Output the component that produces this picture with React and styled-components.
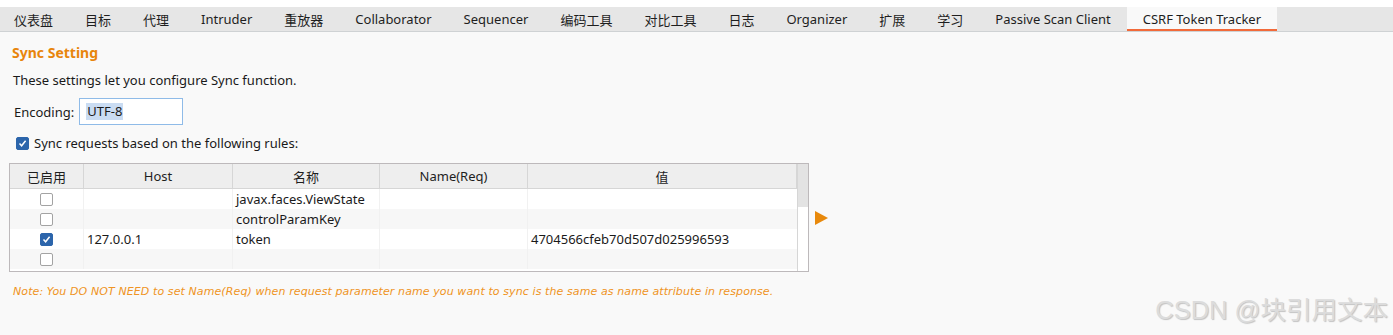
import React from "react";
import styled, { createGlobalStyle } from "styled-components";

const GlobalStyle = createGlobalStyle`
  html, body { margin: 0; padding: 0; }
  body {
    background: #f9f9f9;
    font-family: "Noto Sans", "Noto Sans CJK SC", sans-serif;
    font-size: 13px;
    color: #1a1a1a;
    width: 1393px;
    height: 335px;
    overflow: hidden;
  }
`;

const Page = styled.div`
  position: relative;
  width: 1393px;
  height: 335px;
  background: #f9f9f9;
`;

const Header = styled.div`
  background: #ffffff;
  padding-top: 7px;
`;

const TabBar = styled.div`
  display: flex;
  height: 24px;
  background: #e6e6e6;
  border-bottom: 1px solid #cfd2d4;
`;

const Tab = styled.div`
  display: flex;
  align-items: center;
  padding: 2px 16px 0 ${(p) => (p.$first ? "14px" : "16px")};
  height: 24px;
  box-sizing: border-box;
  white-space: nowrap;
  color: #1e1e1e;
  background: ${(p) => (p.$active ? "#f9f9f9" : "transparent")};
  border-bottom: 2px solid ${(p) => (p.$active ? "#f26a3a" : "transparent")};
`;

const Content = styled.div`
  padding: 12px 0 0 9px;
`;

const Title = styled.div`
  color: #e8850c;
  font-weight: bold;
  font-size: 14px;
  line-height: 18px;
  padding-left: 3px;
`;

const Desc = styled.div`
  margin-top: 9px;
  padding-left: 4px;
  line-height: 18px;
`;

const FieldRow = styled.div`
  display: flex;
  align-items: center;
  gap: 5px;
  margin-top: 9px;
  padding-left: 5px;
`;

const Input = styled.div`
  width: 104px;
  height: 27px;
  box-sizing: border-box;
  border: 1px solid #8fbbe8;
  background: #ffffff;
  display: flex;
  align-items: center;
  padding-left: 6px;
`;

const Selected = styled.span`
  background: #cadcf2;
  padding: 0 1px;
  line-height: 17px;
`;

const CheckRow = styled.label`
  display: flex;
  align-items: center;
  gap: 5px;
  margin-top: 9px;
  padding-left: 7px;
`;

const Box = styled.span`
  width: 13px;
  height: 13px;
  box-sizing: border-box;
  border-radius: 2px;
  border: 1px solid ${(p) => (p.$checked ? "#2c65ab" : "#a3a3a3")};
  background: ${(p) => (p.$checked ? "#2c65ab" : "#ffffff")};
  display: inline-flex;
  align-items: center;
  justify-content: center;
  flex: none;
`;

const Check = ({ checked }) => (
  <Box $checked={checked}>
    {checked && (
      <svg width="9" height="9" viewBox="0 0 9 9">
        <path d="M1.5 4.6 L3.6 6.8 L7.6 1.8" fill="none" stroke="#fff" strokeWidth="1.5" />
      </svg>
    )}
  </Box>
);

const TableRow = styled.div`
  display: flex;
  align-items: center;
  gap: 6px;
  margin-top: 11px;
`;

const TableFrame = styled.div`
  display: flex;
  width: 800px;
  height: 109px;
  box-sizing: border-box;
  border: 1px solid #bdb9bb;
  background: #ffffff;
`;

const Grid = styled.div`
  flex: 1;
  display: grid;
  grid-template-columns: 74px 149px 147px 148px 269px;
  grid-auto-rows: 20px;
  grid-template-rows: 25px;
  align-content: start;
`;

const HeadCell = styled.div`
  background: #eeeeee;
  border-right: 1px solid #d6d6d6;
  border-bottom: 1px solid #d6d6d6;
  display: flex;
  align-items: center;
  justify-content: center;
  color: #1e1e1e;
  &:last-child { border-right: none; }
`;

const Cell = styled.div`
  background: ${(p) => (p.$alt ? "#f7f7f7" : "#ffffff")};
  border-right: 1px solid ${(p) => (p.$last ? "transparent" : "#f1f1f1")};
  display: flex;
  align-items: center;
  justify-content: ${(p) => (p.$center ? "center" : "flex-start")};
  padding-left: ${(p) => (p.$center ? "0" : "3px")};
  white-space: nowrap;
  overflow: hidden;
`;

const ScrollTrack = styled.div`
  width: 11px;
  border-left: 1px solid #d6d6d6;
  background: #ffffff;
`;

const ScrollThumb = styled.div`
  height: 43px;
  background: #e3e3e3;
`;

const Arrow = styled.div`
  width: 0;
  height: 0;
  border-top: 7px solid transparent;
  border-bottom: 7px solid transparent;
  border-left: 13px solid #e8890c;
`;

const Note = styled.div`
  margin-top: 13px;
  padding-left: 4px;
  font-family: "DejaVu Sans", "Noto Sans CJK JP", sans-serif;
  font-style: italic;
  font-size: 11px;
  letter-spacing: 0.1px;
  color: #ef9424;
`;

const Watermark = styled.div`
  position: absolute;
  right: 5px;
  bottom: 9px;
  font-family: "Liberation Sans", "Noto Sans CJK SC", sans-serif;
  font-size: 25.5px;
  color: #dcdcdc;
  text-shadow: 1px 1px 1px #c2c2c2;
  white-space: nowrap;
`;

const tabs = [
  "仪表盘", "目标", "代理", "Intruder", "重放器", "Collaborator", "Sequencer",
  "编码工具", "对比工具", "日志", "Organizer", "扩展", "学习", "Passive Scan Client",
  "CSRF Token Tracker",
];

const rows = [
  { on: false, host: "", name: "javax.faces.ViewState", req: "", val: "" },
  { on: false, host: "", name: "controlParamKey", req: "", val: "" },
  { on: true, host: "127.0.0.1", name: "token", req: "", val: "4704566cfeb70d507d025996593" },
  { on: false, host: "", name: "", req: "", val: "" },
];

export default function App() {
  return (
    <Page>
      <GlobalStyle />
      <Header>
        <TabBar>
          {tabs.map((t, i) => (
            <Tab key={t} $first={i === 0} $active={i === tabs.length - 1}>
              {t}
            </Tab>
          ))}
        </TabBar>
      </Header>
      <Content>
        <Title>Sync Setting</Title>
        <Desc>These settings let you configure Sync function.</Desc>
        <FieldRow>
          <span>Encoding:</span>
          <Input>
            <Selected>UTF-8</Selected>
          </Input>
        </FieldRow>
        <CheckRow>
          <Check checked />
          <span>Sync requests based on the following rules:</span>
        </CheckRow>
        <TableRow>
          <TableFrame>
            <Grid>
              <HeadCell>已启用</HeadCell>
              <HeadCell>Host</HeadCell>
              <HeadCell>名称</HeadCell>
              <HeadCell>Name(Req)</HeadCell>
              <HeadCell>值</HeadCell>
              {rows.map((r, i) => (
                <React.Fragment key={i}>
                  <Cell $alt={i % 2 === 1} $center>
                    <Check checked={r.on} />
                  </Cell>
                  <Cell $alt={i % 2 === 1}>{r.host}</Cell>
                  <Cell $alt={i % 2 === 1}>{r.name}</Cell>
                  <Cell $alt={i % 2 === 1}>{r.req}</Cell>
                  <Cell $alt={i % 2 === 1} $last>{r.val}</Cell>
                </React.Fragment>
              ))}
            </Grid>
            <ScrollTrack>
              <ScrollThumb />
            </ScrollTrack>
          </TableFrame>
          <Arrow />
        </TableRow>
        <Note>
          Note: You DO NOT NEED to set Name(Req) when request parameter name you want to sync is the same as name attribute in response.
        </Note>
      </Content>
      <Watermark>CSDN @块引用文本</Watermark>
    </Page>
  );
}
